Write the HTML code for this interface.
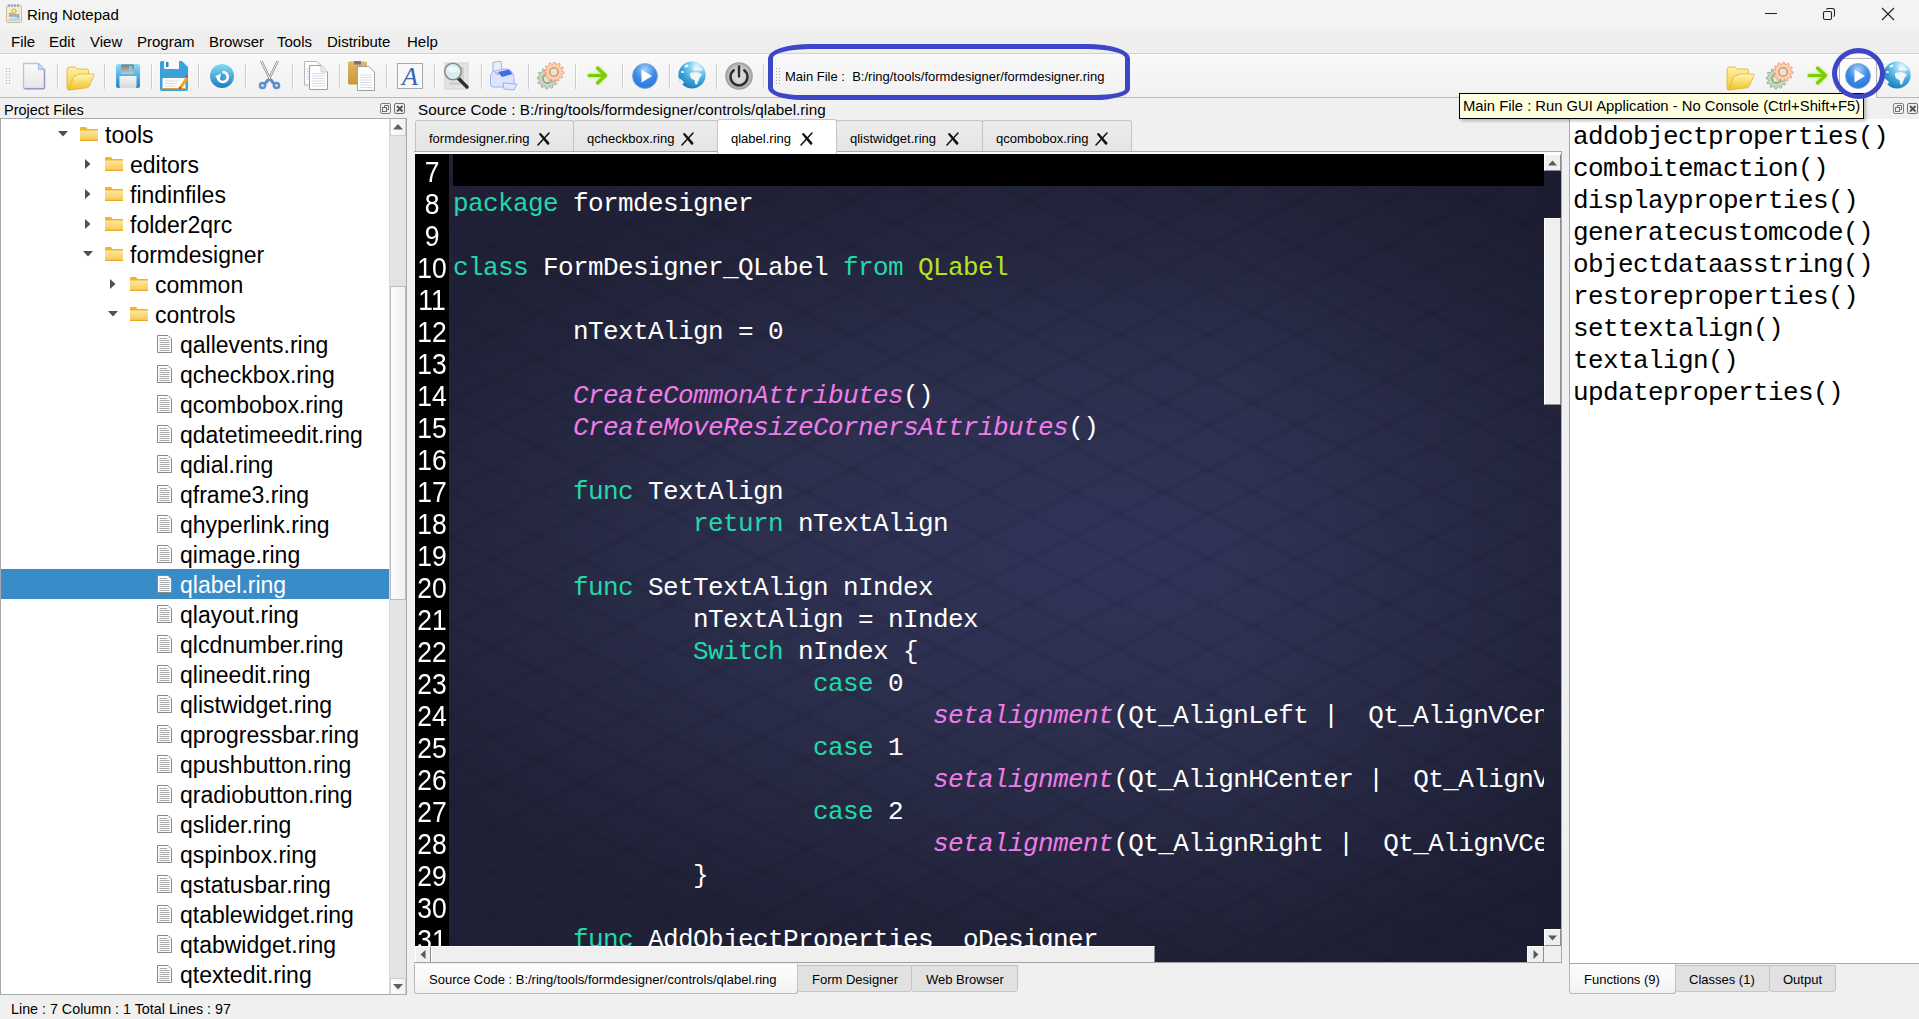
<!DOCTYPE html>
<html><head><meta charset="utf-8">
<style>
*{box-sizing:border-box}
html,body{margin:0;padding:0}
body{width:1919px;height:1019px;position:relative;overflow:hidden;background:#f0f0f0;font-family:"Liberation Sans",sans-serif;color:#000}
.a{position:absolute}
.t{position:absolute;white-space:pre;line-height:1}
#title{left:0;top:0;width:1919px;height:29px;background:#f3f3f3}
#menu{left:0;top:29px;width:1919px;height:25px;background:#eeeeee;border-bottom:1px solid #d2d2d2}
#tb{left:0;top:54px;width:1919px;height:44px;background:linear-gradient(#f9f9f9,#f1f1f1);border-bottom:1px solid #bababa}
.sep{position:absolute;top:64px;width:1px;height:25px;background:#d4d4d4;border-right:1px solid #fbfbfb}
#tree{left:0;top:118px;width:407px;height:877px;background:#fff;border:1px solid #a9a9a9}
.row{position:absolute;left:0;height:30px;width:388px;font-size:23px;line-height:30px;white-space:pre}
#editor{left:415px;top:154px;width:1146px;height:810px;overflow:hidden;
 background:repeating-linear-gradient(26.57deg,rgba(10,10,25,0) 0px,rgba(10,10,25,0) 34px,rgba(10,10,25,0.07) 34px,rgba(10,10,25,0.07) 40px),
 repeating-linear-gradient(153.43deg,rgba(10,10,25,0) 0px,rgba(10,10,25,0) 34px,rgba(10,10,25,0.07) 34px,rgba(10,10,25,0.07) 40px),
 linear-gradient(90deg,rgba(15,15,28,0) 72%,rgba(15,15,28,0.24) 100%),
 radial-gradient(ellipse 800px 400px at 700px 400px,#31345a 0%,#2b2e4b 50%,#202137 100%)}
.ln{position:absolute;left:0;width:34px;height:32px;font-size:26.5px;line-height:32px;color:#fff;text-align:center;transform:scaleY(1.1);transform-origin:50% 20%}
.cl{position:absolute;left:38px;height:32px;font-family:"Liberation Mono",monospace;font-size:26px;letter-spacing:-0.6px;line-height:32px;color:#fff;white-space:pre}
.k{color:#22d8a8}.y{color:#b8e41e}.p{color:#f07ce8;font-style:italic}
.tab{position:absolute;top:120px;height:34px;background:linear-gradient(#ececec,#e4e4e4);border:1px solid #c4c4c4;border-bottom:none;font-size:13px;border-radius:3px 3px 0 0}
.fn{position:absolute;left:4px;font-family:"Liberation Mono",monospace;font-size:26px;letter-spacing:-0.6px;line-height:32px;white-space:pre}
</style></head><body>

<!-- title bar -->
<div id="title" class="a"></div>
<div class="t" style="left:27px;top:7px;font-size:15px;color:#000">Ring Notepad</div>
<!-- window controls -->
<div class="a" style="left:1765px;top:13px;width:12px;height:1px;background:#222"></div>
<svg class="a" style="left:1822px;top:7px" width="14" height="14" viewBox="0 0 14 14"><rect x="1.5" y="4.5" width="8" height="8" rx="1.5" fill="none" stroke="#222" stroke-width="1.1"/><path d="M4.5 2.5 Q4.8 1.5 6 1.5 H10.5 Q12.5 1.5 12.5 3.5 V8 Q12.5 9.2 11.5 9.5" fill="none" stroke="#222" stroke-width="1.1"/></svg>
<svg class="a" style="left:1881px;top:7px" width="14" height="14" viewBox="0 0 14 14"><path d="M1 1 L13 13 M13 1 L1 13" stroke="#222" stroke-width="1.1"/></svg>

<!-- menu -->
<div id="menu" class="a"></div>
<div class="t" style="left:11px;top:34px;font-size:15px">File</div>
<div class="t" style="left:49px;top:34px;font-size:15px">Edit</div>
<div class="t" style="left:90px;top:34px;font-size:15px">View</div>
<div class="t" style="left:137px;top:34px;font-size:15px">Program</div>
<div class="t" style="left:209px;top:34px;font-size:15px">Browser</div>
<div class="t" style="left:277px;top:34px;font-size:15px">Tools</div>
<div class="t" style="left:327px;top:34px;font-size:15px">Distribute</div>
<div class="t" style="left:407px;top:34px;font-size:15px">Help</div>

<!-- toolbar -->
<div id="tb" class="a"></div>
<svg class="a" style="left:6px;top:68px" width="4" height="16" viewBox="0 0 4 16"><rect x="0" y="0" width="1" height="1" fill="#a8a8a8"/><rect x="0" y="3" width="1" height="1" fill="#a8a8a8"/><rect x="0" y="6" width="1" height="1" fill="#a8a8a8"/><rect x="0" y="9" width="1" height="1" fill="#a8a8a8"/><rect x="0" y="12" width="1" height="1" fill="#a8a8a8"/><rect x="0" y="15" width="1" height="1" fill="#a8a8a8"/><rect x="3" y="0" width="1" height="1" fill="#a8a8a8"/><rect x="3" y="3" width="1" height="1" fill="#a8a8a8"/><rect x="3" y="6" width="1" height="1" fill="#a8a8a8"/><rect x="3" y="9" width="1" height="1" fill="#a8a8a8"/><rect x="3" y="12" width="1" height="1" fill="#a8a8a8"/><rect x="3" y="15" width="1" height="1" fill="#a8a8a8"/></svg>
<div class="a" style="left:57px;top:64px;width:1px;height:25px;background:#cdcdcd"></div><div class="a" style="left:58px;top:64px;width:1px;height:25px;background:#fdfdfd"></div>
<div class="a" style="left:104px;top:64px;width:1px;height:25px;background:#cdcdcd"></div><div class="a" style="left:105px;top:64px;width:1px;height:25px;background:#fdfdfd"></div>
<div class="a" style="left:151px;top:64px;width:1px;height:25px;background:#cdcdcd"></div><div class="a" style="left:152px;top:64px;width:1px;height:25px;background:#fdfdfd"></div>
<div class="a" style="left:198px;top:64px;width:1px;height:25px;background:#cdcdcd"></div><div class="a" style="left:199px;top:64px;width:1px;height:25px;background:#fdfdfd"></div>
<div class="a" style="left:245px;top:64px;width:1px;height:25px;background:#cdcdcd"></div><div class="a" style="left:246px;top:64px;width:1px;height:25px;background:#fdfdfd"></div>
<div class="a" style="left:292px;top:64px;width:1px;height:25px;background:#cdcdcd"></div><div class="a" style="left:293px;top:64px;width:1px;height:25px;background:#fdfdfd"></div>
<div class="a" style="left:339px;top:64px;width:1px;height:25px;background:#cdcdcd"></div><div class="a" style="left:340px;top:64px;width:1px;height:25px;background:#fdfdfd"></div>
<div class="a" style="left:386px;top:64px;width:1px;height:25px;background:#cdcdcd"></div><div class="a" style="left:387px;top:64px;width:1px;height:25px;background:#fdfdfd"></div>
<div class="a" style="left:434px;top:64px;width:1px;height:25px;background:#cdcdcd"></div><div class="a" style="left:435px;top:64px;width:1px;height:25px;background:#fdfdfd"></div>
<div class="a" style="left:481px;top:64px;width:1px;height:25px;background:#cdcdcd"></div><div class="a" style="left:482px;top:64px;width:1px;height:25px;background:#fdfdfd"></div>
<div class="a" style="left:528px;top:64px;width:1px;height:25px;background:#cdcdcd"></div><div class="a" style="left:529px;top:64px;width:1px;height:25px;background:#fdfdfd"></div>
<div class="a" style="left:575px;top:64px;width:1px;height:25px;background:#cdcdcd"></div><div class="a" style="left:576px;top:64px;width:1px;height:25px;background:#fdfdfd"></div>
<div class="a" style="left:622px;top:64px;width:1px;height:25px;background:#cdcdcd"></div><div class="a" style="left:623px;top:64px;width:1px;height:25px;background:#fdfdfd"></div>
<div class="a" style="left:669px;top:64px;width:1px;height:25px;background:#cdcdcd"></div><div class="a" style="left:670px;top:64px;width:1px;height:25px;background:#fdfdfd"></div>
<div class="a" style="left:716px;top:64px;width:1px;height:25px;background:#cdcdcd"></div><div class="a" style="left:717px;top:64px;width:1px;height:25px;background:#fdfdfd"></div>
<div class="a" style="left:763px;top:64px;width:1px;height:25px;background:#cdcdcd"></div><div class="a" style="left:764px;top:64px;width:1px;height:25px;background:#fdfdfd"></div>
<svg class="a" style="left:22px;top:62px" width="24" height="28" viewBox="0 0 24 28"><defs><linearGradient id="gn" x1="0" y1="0" x2="0" y2="1"><stop offset="0" stop-color="#fafafa"/><stop offset="1" stop-color="#e6e6e6"/></linearGradient></defs>
<path d="M1.5 1.5 H16.5 L22.5 7.5 V25.5 Q22.5 26.5 21.5 26.5 H2.5 Q1.5 26.5 1.5 25.5Z" fill="url(#gn)" stroke="#b4c3e6" stroke-width="1.3"/>
<path d="M22.5 8 V25.5 Q22.5 26.8 21.5 26.8 H2.5" fill="none" stroke="#9898c0" stroke-width="1.4"/>
<path d="M16.5 1.5 V7.5 H22.5Z" fill="#cbdaf5" stroke="#9fb8ea" stroke-width="1"/></svg>
<svg class="a" style="left:66px;top:66px" width="29" height="25" viewBox="0 0 29 25"><defs><linearGradient id="go66" x1="0" y1="0" x2="0" y2="1"><stop offset="0" stop-color="#fff3a8"/><stop offset="1" stop-color="#f4c62e"/></linearGradient>
<linearGradient id="go266" x1="0" y1="0" x2="0" y2="1"><stop offset="0" stop-color="#fff6b8"/><stop offset="1" stop-color="#f2c21f"/></linearGradient></defs>
<path d="M1 4 Q1 1 4 1 H9 L11 3 H21 Q22.5 3 22.5 5 V20 L3 24 Q1 24 1 22Z" fill="url(#go66)" stroke="#d9b032" stroke-width="0.8"/>
<path d="M3 24 L7 12 Q8 9.5 10 9.5 L14 8 H27.5 Q28.5 8 28 9.5 L23 20.5 Q22.5 21.5 21 21.8 Z" fill="url(#go266)" stroke="#dcb23a" stroke-width="0.8"/></svg>
<svg class="a" style="left:116px;top:64px" width="24" height="24" viewBox="0 0 24 24"><defs><linearGradient id="gs" x1="0" y1="0" x2="0" y2="1"><stop offset="0" stop-color="#8fdcf8"/><stop offset="1" stop-color="#1585c8"/></linearGradient>
<linearGradient id="gs2" x1="0" y1="0" x2="0" y2="1"><stop offset="0" stop-color="#7b7b7b"/><stop offset="1" stop-color="#c8c8c8"/></linearGradient>
<linearGradient id="gs3" x1="0" y1="0" x2="0" y2="1"><stop offset="0" stop-color="#f4f4f4"/><stop offset="1" stop-color="#d8d8d8"/></linearGradient></defs>
<rect x="0" y="0" width="24" height="24" rx="2.5" fill="url(#gs)"/>
<rect x="5" y="0.5" width="13" height="9.5" rx="1" fill="url(#gs2)"/>
<rect x="13" y="2" width="3" height="6" fill="#7fcdf0"/>
<rect x="3.5" y="12" width="17" height="12" rx="1" fill="url(#gs3)"/></svg>
<svg class="a" style="left:160px;top:61px" width="28" height="30" viewBox="0 0 28 30"><path d="M2 0 H22 L28 6 V28 Q28 30 26 30 H2 Q0 30 0 28 V2 Q0 0 2 0Z" fill="#3ba1da"/>
<rect x="4" y="0" width="15" height="8" fill="#fafafa"/><rect x="6" y="1" width="2.5" height="5" fill="#2c89c2"/>
<rect x="2.5" y="17" width="23" height="11" fill="#fdfdfd"/>
<path d="M5 20 H18 M5 22.5 H17 M5 25 H15" stroke="#d2d2d2" stroke-width="0.8"/>
<rect x="2.5" y="27" width="23" height="1.3" fill="#e0a040"/>
<path d="M19.5 25.5 L26 16 L28.5 18 L22 27 Z" fill="#efa425"/>
<path d="M25.5 15.5 L27 13.5 L29.5 15.5 L28.3 17.5Z" fill="#e63c3c"/>
<path d="M19.5 25.5 L19 28 L21.5 27Z" fill="#333"/></svg>
<svg class="a" style="left:210px;top:64px" width="24" height="24" viewBox="0 0 24 24"><defs><linearGradient id="gr" x1="0" y1="0" x2="0" y2="1"><stop offset="0" stop-color="#89daf6"/><stop offset="1" stop-color="#1a7cbf"/></linearGradient></defs>
<circle cx="12" cy="12" r="12" fill="url(#gr)"/>
<path d="M7.8 13 A5 5 0 1 0 12.5 8" fill="none" stroke="#fff" stroke-width="2.6"/>
<path d="M5 12.5 L11 9.5 L9.5 16Z" fill="#fff"/>
<circle cx="12.5" cy="12" r="1.4" fill="#3a9fd8"/></svg>
<svg class="a" style="left:258px;top:61px" width="23" height="29" viewBox="0 0 23 29"><path d="M3.5 0.5 L12.5 19 M19.5 0.5 L10.5 19" stroke="#8a8a8a" stroke-width="2.4" stroke-linecap="round"/>
<path d="M3.5 0.5 L12.5 19 M19.5 0.5 L10.5 19" stroke="#f4f4f4" stroke-width="1" stroke-linecap="round"/>
<path d="M10 19 L6 24 M13 19 L17 24" stroke="#5a8fcc" stroke-width="3" stroke-linecap="round"/>
<circle cx="4.5" cy="24.5" r="3.8" fill="#5b8ecb"/><circle cx="18.5" cy="24.5" r="3.8" fill="#5b8ecb"/>
<circle cx="4.5" cy="24.5" r="1.3" fill="#e6eef8"/><circle cx="18.5" cy="24.5" r="1.3" fill="#e6eef8"/></svg>
<svg class="a" style="left:304px;top:61px" width="25" height="30" viewBox="0 0 25 30"><path d="M0.5 0.5 H13 L17 4.5 V24 H0.5Z" fill="#fbfbfb" stroke="#b8b8b8"/>
<path d="M5.5 4.5 H17 L23.5 11 V28.5 H5.5Z" fill="#fefefe" stroke="#9e9e9e"/>
<path d="M17 4.5 V11 H23.5" fill="#ececec" stroke="#c0c0c0" stroke-width="0.7"/>
<path d="M8 12.5H21 M8 15H21 M8 17.5H21 M8 20H21 M8 22.5H21 M8 25H21" stroke="#d4dde8" stroke-width="1"/>
<path d="M3 8H5 M3 10.5H5 M3 13H5 M3 15.5H5 M3 18H5" stroke="#c8d6e8" stroke-width="1"/></svg>
<svg class="a" style="left:348px;top:61px" width="27" height="30" viewBox="0 0 27 30"><defs><linearGradient id="gp" x1="0" y1="0" x2="0" y2="1"><stop offset="0" stop-color="#e0b866"/><stop offset="1" stop-color="#c89635"/></linearGradient></defs>
<rect x="0" y="0.5" width="19" height="23" rx="1.5" fill="url(#gp)"/>
<rect x="6" y="0" width="7" height="3.5" fill="#777"/>
<path d="M9.5 5.5 H21 L26.5 11 V29.5 H9.5Z" fill="#fefefe" stroke="#a0a0a0"/>
<path d="M12 14H24 M12 16.5H24 M12 19H24 M12 21.5H24 M12 24H24 M12 26.5H24" stroke="#d4dde8" stroke-width="1"/></svg>
<svg class="a" style="left:397px;top:63px" width="26" height="26" viewBox="0 0 26 26"><rect x="0.5" y="0.5" width="25" height="25" fill="#f8f8f8" stroke="#a8a8a8"/>
<text x="13" y="22" text-anchor="middle" font-family="Liberation Serif" font-style="italic" font-size="26" fill="#3466b0">A</text></svg>
<svg class="a" style="left:443px;top:62px" width="28" height="28" viewBox="0 0 28 28"><rect x="2" y="1" width="23" height="26" fill="#e4e4e4" stroke="#d2d2d2"/>
<rect x="13" y="5" width="8" height="14" fill="#d0d0d0"/><rect x="6" y="20" width="12" height="3" fill="#d0d0d0"/>
<path d="M14 15 L24 25" stroke="#2e2e2e" stroke-width="3.5" stroke-linecap="round"/>
<circle cx="10" cy="9.5" r="8.3" fill="#d8ecf0" stroke="#8a8a8a" stroke-width="1.5"/>
<ellipse cx="10" cy="7.5" rx="6" ry="3" fill="#eef8fa"/></svg>
<svg class="a" style="left:490px;top:61px" width="28" height="30" viewBox="0 0 28 30"><path d="M3 11 L3 1.5 L11 0 L12 10Z" fill="#e8eefe" stroke="#8aa0f0" stroke-width="0.8" transform="translate(0,0)"/>
<path d="M0.5 16 Q0.5 11 5 10 L14 8 Q19 7.5 21 10 L23 13 Q24 15 24 19 V24 Q24 26 22 26 H3 Q0.5 26 0.5 23Z" fill="#dde4fd" stroke="#98a8f0" stroke-width="0.9"/>
<path d="M8 11 L19 8.5 L22.5 13 L12 16Z" fill="#3f6ee6"/>
<path d="M13 22 L27 23 L24 29 L14 28Z" fill="#e0e8fe" stroke="#8aa0f0" stroke-width="0.8"/>
<circle cx="6" cy="12" r="0.8" fill="#3c3"/><circle cx="8" cy="13" r="0.8" fill="#e44"/></svg>
<svg class="a" style="left:537px;top:62px" width="29" height="28" viewBox="0 0 29 28"><polygon points="21.00,16.50 20.91,17.87 18.41,18.62 18.07,19.63 19.59,21.75 18.83,22.89 16.29,22.29 15.49,23.00 15.75,25.59 14.52,26.20 12.62,24.41 11.57,24.62 10.50,27.00 9.13,26.91 8.38,24.41 7.37,24.07 5.25,25.59 4.11,24.83 4.71,22.29 4.00,21.49 1.41,21.75 0.80,20.52 2.59,18.62 2.38,17.57 0.00,16.50 0.09,15.13 2.59,14.38 2.93,13.37 1.41,11.25 2.17,10.11 4.71,10.71 5.51,10.00 5.25,7.41 6.48,6.80 8.38,8.59 9.43,8.38 10.50,6.00 11.87,6.09 12.62,8.59 13.63,8.93 15.75,7.41 16.89,8.17 16.29,10.71 17.00,11.51 19.59,11.25 20.20,12.48 18.41,14.38 18.62,15.43" fill="#c9d6c0" stroke="#8aa58a" stroke-width="0.8"/><circle cx="10.5" cy="16.5" r="4.41" fill="#dfe9d8" stroke="#8aa58a" stroke-width="1.6"/><polygon points="27.00,10.00 26.91,11.31 24.53,12.02 24.21,12.98 25.66,15.00 24.93,16.09 22.52,15.52 21.75,16.19 22.00,18.66 20.83,19.24 19.02,17.53 18.02,17.73 17.00,20.00 15.69,19.91 14.98,17.53 14.02,17.21 12.00,18.66 10.91,17.93 11.48,15.52 10.81,14.75 8.34,15.00 7.76,13.83 9.47,12.02 9.27,11.02 7.00,10.00 7.09,8.69 9.47,7.98 9.79,7.02 8.34,5.00 9.07,3.91 11.48,4.48 12.25,3.81 12.00,1.34 13.17,0.76 14.98,2.47 15.98,2.27 17.00,0.00 18.31,0.09 19.02,2.47 19.98,2.79 22.00,1.34 23.09,2.07 22.52,4.48 23.19,5.25 25.66,5.00 26.24,6.17 24.53,7.98 24.73,8.98" fill="#fcd2b4" stroke="#e8926a" stroke-width="0.8"/><circle cx="17" cy="10" r="4.2" fill="#dfe9d8" stroke="#e8926a" stroke-width="1.6"/></svg>
<svg class="a" style="left:585px;top:65px" width="26" height="22" viewBox="0 0 26 22"><defs><filter id="bl585"><feGaussianBlur stdDeviation="1.2"/></filter></defs>
<path d="M3 10.5 H20 M12 2.5 L20.5 10.5 L12 18.5" fill="none" stroke="#c8ee90" stroke-width="5" filter="url(#bl585)"/>
<path d="M4 10.5 H20 M12.5 3 L20.5 10.5 L12.5 18" fill="none" stroke="#7ccc0c" stroke-width="3.2" stroke-linecap="round" stroke-linejoin="round"/></svg>
<svg class="a" style="left:632px;top:63px" width="26" height="26" viewBox="0 0 26 26"><defs><radialGradient id="gpl632" cx="0.5" cy="0.25" r="0.8"><stop offset="0" stop-color="#a8d0fb"/><stop offset="0.5" stop-color="#3b8bea"/><stop offset="1" stop-color="#2a72d8"/></radialGradient></defs>
<circle cx="13" cy="13" r="12.5" fill="url(#gpl632)" stroke="#8aa6c6" stroke-width="0.8"/>
<path d="M9.5 6.5 L20 13 L9.5 19.5Z" fill="#fff"/></svg>
<svg class="a" style="left:678px;top:61px" width="28" height="28" viewBox="0 0 28 28"><defs><radialGradient id="ggl678" cx="0.68" cy="0.18" r="0.95"><stop offset="0" stop-color="#e4f8fe"/><stop offset="0.3" stop-color="#7fcdf0"/><stop offset="0.6" stop-color="#3aa2d8"/><stop offset="1" stop-color="#1670b0"/></radialGradient></defs>
<circle cx="14" cy="14" r="13.6" fill="url(#ggl678)"/>
<path d="M12 12.5 Q13 11 15.5 11.5 L19 11 Q21 12.5 23.5 13 Q24 15 22 16 Q21 18 20 21 Q19 24 18 24 Q16.5 21.5 16.5 19 Q14 18.5 13 17 Q11.5 15 12 12.5Z" fill="#f2f5f6"/>
<path d="M15 7 Q19 5.5 22 6.5 L25.5 8.5 Q23 9.8 19.5 9.2 L16 9.8Z" fill="#eaf6fb"/>
<ellipse cx="8.5" cy="5" rx="2.2" ry="1.2" transform="rotate(-30 8.5 5)" fill="#f4fafd"/>
<ellipse cx="4.5" cy="11" rx="1.6" ry="1" fill="#f4fafd"/>
<path d="M0.8 17 Q3 18 6 21 Q5.5 23 4 23.5 Q1.5 21 0.8 17Z" fill="#eef4f7"/></svg>
<svg class="a" style="left:725px;top:62px" width="28" height="28" viewBox="0 0 28 28"><defs><radialGradient id="gpw" cx="0.5" cy="0.5" r="0.5"><stop offset="0" stop-color="#e8e8e8"/><stop offset="0.7" stop-color="#c4c4c4"/><stop offset="1" stop-color="#9a9a9a"/></radialGradient></defs>
<circle cx="14" cy="14" r="13.8" fill="url(#gpw)"/>
<path d="M8.8 8.2 A8.5 8.5 0 1 0 19.2 8.2" fill="none" stroke="#2c2c2c" stroke-width="2.4" stroke-linecap="round"/>
<path d="M14 4.5 V14.5" stroke="#2c2c2c" stroke-width="2.4" stroke-linecap="round"/></svg>
<svg class="a" style="left:776px;top:68px" width="4" height="16" viewBox="0 0 4 16"><rect x="0" y="0" width="1" height="1" fill="#a8a8a8"/><rect x="0" y="3" width="1" height="1" fill="#a8a8a8"/><rect x="0" y="6" width="1" height="1" fill="#a8a8a8"/><rect x="0" y="9" width="1" height="1" fill="#a8a8a8"/><rect x="0" y="12" width="1" height="1" fill="#a8a8a8"/><rect x="0" y="15" width="1" height="1" fill="#a8a8a8"/><rect x="3" y="0" width="1" height="1" fill="#a8a8a8"/><rect x="3" y="3" width="1" height="1" fill="#a8a8a8"/><rect x="3" y="6" width="1" height="1" fill="#a8a8a8"/><rect x="3" y="9" width="1" height="1" fill="#a8a8a8"/><rect x="3" y="12" width="1" height="1" fill="#a8a8a8"/><rect x="3" y="15" width="1" height="1" fill="#a8a8a8"/></svg>
<div class="t" style="left:785px;top:70px;font-size:13px">Main File :  B:/ring/tools/formdesigner/formdesigner.ring</div>
<div class="a" style="left:1839px;top:58px;width:38px;height:40px;background:#fdfdfd;border:1px solid #b4b4b4;border-bottom:none"></div>
<svg class="a" style="left:1726px;top:66px" width="29" height="25" viewBox="0 0 29 25"><defs><linearGradient id="go1726" x1="0" y1="0" x2="0" y2="1"><stop offset="0" stop-color="#fff3a8"/><stop offset="1" stop-color="#f4c62e"/></linearGradient>
<linearGradient id="go21726" x1="0" y1="0" x2="0" y2="1"><stop offset="0" stop-color="#fff6b8"/><stop offset="1" stop-color="#f2c21f"/></linearGradient></defs>
<path d="M1 4 Q1 1 4 1 H9 L11 3 H21 Q22.5 3 22.5 5 V20 L3 24 Q1 24 1 22Z" fill="url(#go1726)" stroke="#d9b032" stroke-width="0.8"/>
<path d="M3 24 L7 12 Q8 9.5 10 9.5 L14 8 H27.5 Q28.5 8 28 9.5 L23 20.5 Q22.5 21.5 21 21.8 Z" fill="url(#go21726)" stroke="#dcb23a" stroke-width="0.8"/></svg>
<svg class="a" style="left:1766px;top:62px" width="29" height="28" viewBox="0 0 29 28"><polygon points="21.00,16.50 20.91,17.87 18.41,18.62 18.07,19.63 19.59,21.75 18.83,22.89 16.29,22.29 15.49,23.00 15.75,25.59 14.52,26.20 12.62,24.41 11.57,24.62 10.50,27.00 9.13,26.91 8.38,24.41 7.37,24.07 5.25,25.59 4.11,24.83 4.71,22.29 4.00,21.49 1.41,21.75 0.80,20.52 2.59,18.62 2.38,17.57 0.00,16.50 0.09,15.13 2.59,14.38 2.93,13.37 1.41,11.25 2.17,10.11 4.71,10.71 5.51,10.00 5.25,7.41 6.48,6.80 8.38,8.59 9.43,8.38 10.50,6.00 11.87,6.09 12.62,8.59 13.63,8.93 15.75,7.41 16.89,8.17 16.29,10.71 17.00,11.51 19.59,11.25 20.20,12.48 18.41,14.38 18.62,15.43" fill="#c9d6c0" stroke="#8aa58a" stroke-width="0.8"/><circle cx="10.5" cy="16.5" r="4.41" fill="#dfe9d8" stroke="#8aa58a" stroke-width="1.6"/><polygon points="27.00,10.00 26.91,11.31 24.53,12.02 24.21,12.98 25.66,15.00 24.93,16.09 22.52,15.52 21.75,16.19 22.00,18.66 20.83,19.24 19.02,17.53 18.02,17.73 17.00,20.00 15.69,19.91 14.98,17.53 14.02,17.21 12.00,18.66 10.91,17.93 11.48,15.52 10.81,14.75 8.34,15.00 7.76,13.83 9.47,12.02 9.27,11.02 7.00,10.00 7.09,8.69 9.47,7.98 9.79,7.02 8.34,5.00 9.07,3.91 11.48,4.48 12.25,3.81 12.00,1.34 13.17,0.76 14.98,2.47 15.98,2.27 17.00,0.00 18.31,0.09 19.02,2.47 19.98,2.79 22.00,1.34 23.09,2.07 22.52,4.48 23.19,5.25 25.66,5.00 26.24,6.17 24.53,7.98 24.73,8.98" fill="#fcd2b4" stroke="#e8926a" stroke-width="0.8"/><circle cx="17" cy="10" r="4.2" fill="#dfe9d8" stroke="#e8926a" stroke-width="1.6"/></svg>
<svg class="a" style="left:1805px;top:65px" width="26" height="22" viewBox="0 0 26 22"><defs><filter id="bl1805"><feGaussianBlur stdDeviation="1.2"/></filter></defs>
<path d="M3 10.5 H20 M12 2.5 L20.5 10.5 L12 18.5" fill="none" stroke="#c8ee90" stroke-width="5" filter="url(#bl1805)"/>
<path d="M4 10.5 H20 M12.5 3 L20.5 10.5 L12.5 18" fill="none" stroke="#7ccc0c" stroke-width="3.2" stroke-linecap="round" stroke-linejoin="round"/></svg>
<svg class="a" style="left:1845px;top:63px" width="26" height="26" viewBox="0 0 26 26"><defs><radialGradient id="gpl1845" cx="0.5" cy="0.25" r="0.8"><stop offset="0" stop-color="#a8d0fb"/><stop offset="0.5" stop-color="#3b8bea"/><stop offset="1" stop-color="#2a72d8"/></radialGradient></defs>
<circle cx="13" cy="13" r="12.5" fill="url(#gpl1845)" stroke="#8aa6c6" stroke-width="0.8"/>
<path d="M9.5 6.5 L20 13 L9.5 19.5Z" fill="#fff"/></svg>
<svg class="a" style="left:1883px;top:61px" width="28" height="28" viewBox="0 0 28 28"><defs><radialGradient id="ggl1883" cx="0.68" cy="0.18" r="0.95"><stop offset="0" stop-color="#e4f8fe"/><stop offset="0.3" stop-color="#7fcdf0"/><stop offset="0.6" stop-color="#3aa2d8"/><stop offset="1" stop-color="#1670b0"/></radialGradient></defs>
<circle cx="14" cy="14" r="13.6" fill="url(#ggl1883)"/>
<path d="M12 12.5 Q13 11 15.5 11.5 L19 11 Q21 12.5 23.5 13 Q24 15 22 16 Q21 18 20 21 Q19 24 18 24 Q16.5 21.5 16.5 19 Q14 18.5 13 17 Q11.5 15 12 12.5Z" fill="#f2f5f6"/>
<path d="M15 7 Q19 5.5 22 6.5 L25.5 8.5 Q23 9.8 19.5 9.2 L16 9.8Z" fill="#eaf6fb"/>
<ellipse cx="8.5" cy="5" rx="2.2" ry="1.2" transform="rotate(-30 8.5 5)" fill="#f4fafd"/>
<ellipse cx="4.5" cy="11" rx="1.6" ry="1" fill="#f4fafd"/>
<path d="M0.8 17 Q3 18 6 21 Q5.5 23 4 23.5 Q1.5 21 0.8 17Z" fill="#eef4f7"/></svg>

<!-- dock titles -->
<div class="t" style="left:4px;top:103px;font-size:14.5px">Project Files</div>
<div class="t" style="left:418px;top:102px;font-size:15.25px">Source Code : B:/ring/tools/formdesigner/controls/qlabel.ring</div>

<!-- tree -->
<div id="tree" class="a"></div>
<svg class="a" style="left:58px;top:131px" width="11" height="6"><path d="M0 0 L10 0 L5 5.5Z" fill="#505050"/></svg>
<svg class="a" style="left:80px;top:127px" width="18" height="14" viewBox="0 0 18 14"><defs><linearGradient id="gf" x1="0" y1="0" x2="0" y2="1"><stop offset="0" stop-color="#fde7a0"/><stop offset="1" stop-color="#f8c850"/></linearGradient></defs><path d="M0 1 Q0 0 1 0 H6 L7.5 2 H18 V14 H0Z" fill="#f2b32a"/><rect x="0" y="3.5" width="18" height="10.5" fill="url(#gf)"/><rect x="0" y="12.8" width="18" height="1.2" fill="#eaa82a"/></svg>
<div class="row" style="left:105px;top:120px">tools</div>
<svg class="a" style="left:85px;top:159px" width="6" height="11"><path d="M0 0 L5.5 5 L0 10Z" fill="#505050"/></svg>
<svg class="a" style="left:105px;top:157px" width="18" height="14" viewBox="0 0 18 14"><defs><linearGradient id="gf" x1="0" y1="0" x2="0" y2="1"><stop offset="0" stop-color="#fde7a0"/><stop offset="1" stop-color="#f8c850"/></linearGradient></defs><path d="M0 1 Q0 0 1 0 H6 L7.5 2 H18 V14 H0Z" fill="#f2b32a"/><rect x="0" y="3.5" width="18" height="10.5" fill="url(#gf)"/><rect x="0" y="12.8" width="18" height="1.2" fill="#eaa82a"/></svg>
<div class="row" style="left:130px;top:150px">editors</div>
<svg class="a" style="left:85px;top:189px" width="6" height="11"><path d="M0 0 L5.5 5 L0 10Z" fill="#505050"/></svg>
<svg class="a" style="left:105px;top:187px" width="18" height="14" viewBox="0 0 18 14"><defs><linearGradient id="gf" x1="0" y1="0" x2="0" y2="1"><stop offset="0" stop-color="#fde7a0"/><stop offset="1" stop-color="#f8c850"/></linearGradient></defs><path d="M0 1 Q0 0 1 0 H6 L7.5 2 H18 V14 H0Z" fill="#f2b32a"/><rect x="0" y="3.5" width="18" height="10.5" fill="url(#gf)"/><rect x="0" y="12.8" width="18" height="1.2" fill="#eaa82a"/></svg>
<div class="row" style="left:130px;top:180px">findinfiles</div>
<svg class="a" style="left:85px;top:219px" width="6" height="11"><path d="M0 0 L5.5 5 L0 10Z" fill="#505050"/></svg>
<svg class="a" style="left:105px;top:217px" width="18" height="14" viewBox="0 0 18 14"><defs><linearGradient id="gf" x1="0" y1="0" x2="0" y2="1"><stop offset="0" stop-color="#fde7a0"/><stop offset="1" stop-color="#f8c850"/></linearGradient></defs><path d="M0 1 Q0 0 1 0 H6 L7.5 2 H18 V14 H0Z" fill="#f2b32a"/><rect x="0" y="3.5" width="18" height="10.5" fill="url(#gf)"/><rect x="0" y="12.8" width="18" height="1.2" fill="#eaa82a"/></svg>
<div class="row" style="left:130px;top:210px">folder2qrc</div>
<svg class="a" style="left:83px;top:251px" width="11" height="6"><path d="M0 0 L10 0 L5 5.5Z" fill="#505050"/></svg>
<svg class="a" style="left:105px;top:247px" width="18" height="14" viewBox="0 0 18 14"><defs><linearGradient id="gf" x1="0" y1="0" x2="0" y2="1"><stop offset="0" stop-color="#fde7a0"/><stop offset="1" stop-color="#f8c850"/></linearGradient></defs><path d="M0 1 Q0 0 1 0 H6 L7.5 2 H18 V14 H0Z" fill="#f2b32a"/><rect x="0" y="3.5" width="18" height="10.5" fill="url(#gf)"/><rect x="0" y="12.8" width="18" height="1.2" fill="#eaa82a"/></svg>
<div class="row" style="left:130px;top:240px">formdesigner</div>
<svg class="a" style="left:110px;top:279px" width="6" height="11"><path d="M0 0 L5.5 5 L0 10Z" fill="#505050"/></svg>
<svg class="a" style="left:130px;top:277px" width="18" height="14" viewBox="0 0 18 14"><defs><linearGradient id="gf" x1="0" y1="0" x2="0" y2="1"><stop offset="0" stop-color="#fde7a0"/><stop offset="1" stop-color="#f8c850"/></linearGradient></defs><path d="M0 1 Q0 0 1 0 H6 L7.5 2 H18 V14 H0Z" fill="#f2b32a"/><rect x="0" y="3.5" width="18" height="10.5" fill="url(#gf)"/><rect x="0" y="12.8" width="18" height="1.2" fill="#eaa82a"/></svg>
<div class="row" style="left:155px;top:270px">common</div>
<svg class="a" style="left:108px;top:311px" width="11" height="6"><path d="M0 0 L10 0 L5 5.5Z" fill="#505050"/></svg>
<svg class="a" style="left:130px;top:307px" width="18" height="14" viewBox="0 0 18 14"><defs><linearGradient id="gf" x1="0" y1="0" x2="0" y2="1"><stop offset="0" stop-color="#fde7a0"/><stop offset="1" stop-color="#f8c850"/></linearGradient></defs><path d="M0 1 Q0 0 1 0 H6 L7.5 2 H18 V14 H0Z" fill="#f2b32a"/><rect x="0" y="3.5" width="18" height="10.5" fill="url(#gf)"/><rect x="0" y="12.8" width="18" height="1.2" fill="#eaa82a"/></svg>
<div class="row" style="left:155px;top:300px">controls</div>
<svg class="a" style="left:157px;top:335px" width="15" height="18" viewBox="0 0 15 18"><path d="M0.5 0.5 H11 L14.5 4 V17.5 H0.5Z" fill="#fdfdfd" stroke="#8a8a8a"/><path d="M2.5 3.5H10M2.5 5.5H12.5M2.5 7.5H12.5M2.5 9.5H12.5M2.5 11.5H12.5M2.5 13.5H12.5M2.5 15.5H12.5" stroke="#a0a0a0" stroke-width="0.9"/></svg>
<div class="row" style="left:180px;top:330px;color:#000">qallevents.ring</div>
<svg class="a" style="left:157px;top:365px" width="15" height="18" viewBox="0 0 15 18"><path d="M0.5 0.5 H11 L14.5 4 V17.5 H0.5Z" fill="#fdfdfd" stroke="#8a8a8a"/><path d="M2.5 3.5H10M2.5 5.5H12.5M2.5 7.5H12.5M2.5 9.5H12.5M2.5 11.5H12.5M2.5 13.5H12.5M2.5 15.5H12.5" stroke="#a0a0a0" stroke-width="0.9"/></svg>
<div class="row" style="left:180px;top:360px;color:#000">qcheckbox.ring</div>
<svg class="a" style="left:157px;top:395px" width="15" height="18" viewBox="0 0 15 18"><path d="M0.5 0.5 H11 L14.5 4 V17.5 H0.5Z" fill="#fdfdfd" stroke="#8a8a8a"/><path d="M2.5 3.5H10M2.5 5.5H12.5M2.5 7.5H12.5M2.5 9.5H12.5M2.5 11.5H12.5M2.5 13.5H12.5M2.5 15.5H12.5" stroke="#a0a0a0" stroke-width="0.9"/></svg>
<div class="row" style="left:180px;top:390px;color:#000">qcombobox.ring</div>
<svg class="a" style="left:157px;top:425px" width="15" height="18" viewBox="0 0 15 18"><path d="M0.5 0.5 H11 L14.5 4 V17.5 H0.5Z" fill="#fdfdfd" stroke="#8a8a8a"/><path d="M2.5 3.5H10M2.5 5.5H12.5M2.5 7.5H12.5M2.5 9.5H12.5M2.5 11.5H12.5M2.5 13.5H12.5M2.5 15.5H12.5" stroke="#a0a0a0" stroke-width="0.9"/></svg>
<div class="row" style="left:180px;top:420px;color:#000">qdatetimeedit.ring</div>
<svg class="a" style="left:157px;top:455px" width="15" height="18" viewBox="0 0 15 18"><path d="M0.5 0.5 H11 L14.5 4 V17.5 H0.5Z" fill="#fdfdfd" stroke="#8a8a8a"/><path d="M2.5 3.5H10M2.5 5.5H12.5M2.5 7.5H12.5M2.5 9.5H12.5M2.5 11.5H12.5M2.5 13.5H12.5M2.5 15.5H12.5" stroke="#a0a0a0" stroke-width="0.9"/></svg>
<div class="row" style="left:180px;top:450px;color:#000">qdial.ring</div>
<svg class="a" style="left:157px;top:485px" width="15" height="18" viewBox="0 0 15 18"><path d="M0.5 0.5 H11 L14.5 4 V17.5 H0.5Z" fill="#fdfdfd" stroke="#8a8a8a"/><path d="M2.5 3.5H10M2.5 5.5H12.5M2.5 7.5H12.5M2.5 9.5H12.5M2.5 11.5H12.5M2.5 13.5H12.5M2.5 15.5H12.5" stroke="#a0a0a0" stroke-width="0.9"/></svg>
<div class="row" style="left:180px;top:480px;color:#000">qframe3.ring</div>
<svg class="a" style="left:157px;top:515px" width="15" height="18" viewBox="0 0 15 18"><path d="M0.5 0.5 H11 L14.5 4 V17.5 H0.5Z" fill="#fdfdfd" stroke="#8a8a8a"/><path d="M2.5 3.5H10M2.5 5.5H12.5M2.5 7.5H12.5M2.5 9.5H12.5M2.5 11.5H12.5M2.5 13.5H12.5M2.5 15.5H12.5" stroke="#a0a0a0" stroke-width="0.9"/></svg>
<div class="row" style="left:180px;top:510px;color:#000">qhyperlink.ring</div>
<svg class="a" style="left:157px;top:545px" width="15" height="18" viewBox="0 0 15 18"><path d="M0.5 0.5 H11 L14.5 4 V17.5 H0.5Z" fill="#fdfdfd" stroke="#8a8a8a"/><path d="M2.5 3.5H10M2.5 5.5H12.5M2.5 7.5H12.5M2.5 9.5H12.5M2.5 11.5H12.5M2.5 13.5H12.5M2.5 15.5H12.5" stroke="#a0a0a0" stroke-width="0.9"/></svg>
<div class="row" style="left:180px;top:540px;color:#000">qimage.ring</div>
<div class="a" style="left:1px;top:569px;width:388px;height:30px;background:#3a8cc9"></div>
<svg class="a" style="left:157px;top:575px" width="15" height="18" viewBox="0 0 15 18"><path d="M0.5 0.5 H11 L14.5 4 V17.5 H0.5Z" fill="#fdfdfd" stroke="#8a8a8a"/><path d="M2.5 3.5H10M2.5 5.5H12.5M2.5 7.5H12.5M2.5 9.5H12.5M2.5 11.5H12.5M2.5 13.5H12.5M2.5 15.5H12.5" stroke="#a0a0a0" stroke-width="0.9"/></svg>
<div class="row" style="left:180px;top:570px;color:#fff">qlabel.ring</div>
<svg class="a" style="left:157px;top:605px" width="15" height="18" viewBox="0 0 15 18"><path d="M0.5 0.5 H11 L14.5 4 V17.5 H0.5Z" fill="#fdfdfd" stroke="#8a8a8a"/><path d="M2.5 3.5H10M2.5 5.5H12.5M2.5 7.5H12.5M2.5 9.5H12.5M2.5 11.5H12.5M2.5 13.5H12.5M2.5 15.5H12.5" stroke="#a0a0a0" stroke-width="0.9"/></svg>
<div class="row" style="left:180px;top:600px;color:#000">qlayout.ring</div>
<svg class="a" style="left:157px;top:635px" width="15" height="18" viewBox="0 0 15 18"><path d="M0.5 0.5 H11 L14.5 4 V17.5 H0.5Z" fill="#fdfdfd" stroke="#8a8a8a"/><path d="M2.5 3.5H10M2.5 5.5H12.5M2.5 7.5H12.5M2.5 9.5H12.5M2.5 11.5H12.5M2.5 13.5H12.5M2.5 15.5H12.5" stroke="#a0a0a0" stroke-width="0.9"/></svg>
<div class="row" style="left:180px;top:630px;color:#000">qlcdnumber.ring</div>
<svg class="a" style="left:157px;top:665px" width="15" height="18" viewBox="0 0 15 18"><path d="M0.5 0.5 H11 L14.5 4 V17.5 H0.5Z" fill="#fdfdfd" stroke="#8a8a8a"/><path d="M2.5 3.5H10M2.5 5.5H12.5M2.5 7.5H12.5M2.5 9.5H12.5M2.5 11.5H12.5M2.5 13.5H12.5M2.5 15.5H12.5" stroke="#a0a0a0" stroke-width="0.9"/></svg>
<div class="row" style="left:180px;top:660px;color:#000">qlineedit.ring</div>
<svg class="a" style="left:157px;top:695px" width="15" height="18" viewBox="0 0 15 18"><path d="M0.5 0.5 H11 L14.5 4 V17.5 H0.5Z" fill="#fdfdfd" stroke="#8a8a8a"/><path d="M2.5 3.5H10M2.5 5.5H12.5M2.5 7.5H12.5M2.5 9.5H12.5M2.5 11.5H12.5M2.5 13.5H12.5M2.5 15.5H12.5" stroke="#a0a0a0" stroke-width="0.9"/></svg>
<div class="row" style="left:180px;top:690px;color:#000">qlistwidget.ring</div>
<svg class="a" style="left:157px;top:725px" width="15" height="18" viewBox="0 0 15 18"><path d="M0.5 0.5 H11 L14.5 4 V17.5 H0.5Z" fill="#fdfdfd" stroke="#8a8a8a"/><path d="M2.5 3.5H10M2.5 5.5H12.5M2.5 7.5H12.5M2.5 9.5H12.5M2.5 11.5H12.5M2.5 13.5H12.5M2.5 15.5H12.5" stroke="#a0a0a0" stroke-width="0.9"/></svg>
<div class="row" style="left:180px;top:720px;color:#000">qprogressbar.ring</div>
<svg class="a" style="left:157px;top:755px" width="15" height="18" viewBox="0 0 15 18"><path d="M0.5 0.5 H11 L14.5 4 V17.5 H0.5Z" fill="#fdfdfd" stroke="#8a8a8a"/><path d="M2.5 3.5H10M2.5 5.5H12.5M2.5 7.5H12.5M2.5 9.5H12.5M2.5 11.5H12.5M2.5 13.5H12.5M2.5 15.5H12.5" stroke="#a0a0a0" stroke-width="0.9"/></svg>
<div class="row" style="left:180px;top:750px;color:#000">qpushbutton.ring</div>
<svg class="a" style="left:157px;top:785px" width="15" height="18" viewBox="0 0 15 18"><path d="M0.5 0.5 H11 L14.5 4 V17.5 H0.5Z" fill="#fdfdfd" stroke="#8a8a8a"/><path d="M2.5 3.5H10M2.5 5.5H12.5M2.5 7.5H12.5M2.5 9.5H12.5M2.5 11.5H12.5M2.5 13.5H12.5M2.5 15.5H12.5" stroke="#a0a0a0" stroke-width="0.9"/></svg>
<div class="row" style="left:180px;top:780px;color:#000">qradiobutton.ring</div>
<svg class="a" style="left:157px;top:815px" width="15" height="18" viewBox="0 0 15 18"><path d="M0.5 0.5 H11 L14.5 4 V17.5 H0.5Z" fill="#fdfdfd" stroke="#8a8a8a"/><path d="M2.5 3.5H10M2.5 5.5H12.5M2.5 7.5H12.5M2.5 9.5H12.5M2.5 11.5H12.5M2.5 13.5H12.5M2.5 15.5H12.5" stroke="#a0a0a0" stroke-width="0.9"/></svg>
<div class="row" style="left:180px;top:810px;color:#000">qslider.ring</div>
<svg class="a" style="left:157px;top:845px" width="15" height="18" viewBox="0 0 15 18"><path d="M0.5 0.5 H11 L14.5 4 V17.5 H0.5Z" fill="#fdfdfd" stroke="#8a8a8a"/><path d="M2.5 3.5H10M2.5 5.5H12.5M2.5 7.5H12.5M2.5 9.5H12.5M2.5 11.5H12.5M2.5 13.5H12.5M2.5 15.5H12.5" stroke="#a0a0a0" stroke-width="0.9"/></svg>
<div class="row" style="left:180px;top:840px;color:#000">qspinbox.ring</div>
<svg class="a" style="left:157px;top:875px" width="15" height="18" viewBox="0 0 15 18"><path d="M0.5 0.5 H11 L14.5 4 V17.5 H0.5Z" fill="#fdfdfd" stroke="#8a8a8a"/><path d="M2.5 3.5H10M2.5 5.5H12.5M2.5 7.5H12.5M2.5 9.5H12.5M2.5 11.5H12.5M2.5 13.5H12.5M2.5 15.5H12.5" stroke="#a0a0a0" stroke-width="0.9"/></svg>
<div class="row" style="left:180px;top:870px;color:#000">qstatusbar.ring</div>
<svg class="a" style="left:157px;top:905px" width="15" height="18" viewBox="0 0 15 18"><path d="M0.5 0.5 H11 L14.5 4 V17.5 H0.5Z" fill="#fdfdfd" stroke="#8a8a8a"/><path d="M2.5 3.5H10M2.5 5.5H12.5M2.5 7.5H12.5M2.5 9.5H12.5M2.5 11.5H12.5M2.5 13.5H12.5M2.5 15.5H12.5" stroke="#a0a0a0" stroke-width="0.9"/></svg>
<div class="row" style="left:180px;top:900px;color:#000">qtablewidget.ring</div>
<svg class="a" style="left:157px;top:935px" width="15" height="18" viewBox="0 0 15 18"><path d="M0.5 0.5 H11 L14.5 4 V17.5 H0.5Z" fill="#fdfdfd" stroke="#8a8a8a"/><path d="M2.5 3.5H10M2.5 5.5H12.5M2.5 7.5H12.5M2.5 9.5H12.5M2.5 11.5H12.5M2.5 13.5H12.5M2.5 15.5H12.5" stroke="#a0a0a0" stroke-width="0.9"/></svg>
<div class="row" style="left:180px;top:930px;color:#000">qtabwidget.ring</div>
<svg class="a" style="left:157px;top:965px" width="15" height="18" viewBox="0 0 15 18"><path d="M0.5 0.5 H11 L14.5 4 V17.5 H0.5Z" fill="#fdfdfd" stroke="#8a8a8a"/><path d="M2.5 3.5H10M2.5 5.5H12.5M2.5 7.5H12.5M2.5 9.5H12.5M2.5 11.5H12.5M2.5 13.5H12.5M2.5 15.5H12.5" stroke="#a0a0a0" stroke-width="0.9"/></svg>
<div class="row" style="left:180px;top:960px;color:#000">qtextedit.ring</div>

<div class="a" style="left:389px;top:119px;width:1px;height:875px;background:#d9d9d9"></div>
<div class="a" style="left:390px;top:119px;width:16px;height:875px;background:#e3e3e3"></div>
<div class="a" style="left:390px;top:119px;width:16px;height:17px;background:linear-gradient(90deg,#fefefe,#f1f1f1);border:1px solid #cfcfcf;border-top:none"></div>
<svg class="a" style="left:393px;top:124px" width="10" height="6"><path d="M0 5.5 L5 0 L10 5.5Z" fill="#606060"/></svg>
<div class="a" style="left:390px;top:286px;width:16px;height:314px;background:linear-gradient(90deg,#fdfdfd,#efefef);border:1px solid #bcbcbc"></div>
<div class="a" style="left:390px;top:978px;width:16px;height:16px;background:linear-gradient(90deg,#fefefe,#f1f1f1);border:1px solid #cfcfcf;border-bottom:none"></div>
<svg class="a" style="left:393px;top:984px" width="10" height="6"><path d="M0 0 L10 0 L5 5.5Z" fill="#606060"/></svg>


<!-- tabs -->
<div class="tab" style="left:415px;width:159px"></div>
<div class="t" style="left:429px;top:132px;font-size:13px;z-index:3">formdesigner.ring</div>
<div style="position:absolute;z-index:3;left:0;top:0"><svg class="a" style="left:537px;top:132px" width="14" height="14" viewBox="0 0 14 14"><path d="M2.5 1.2 Q3.5 0.6 4.2 1.4 L12.2 10.6 Q13 11.8 11.8 12.6 Q10.8 13.2 10 12.2 L2.2 2.6 Q1.8 1.8 2.5 1.2Z" fill="#111"/><path d="M12 1 L1 13" stroke="#111" stroke-width="1.5" stroke-linecap="round"/></svg></div>
<div class="tab" style="left:573px;width:145px"></div>
<div class="t" style="left:587px;top:132px;font-size:13px;z-index:3">qcheckbox.ring</div>
<div style="position:absolute;z-index:3;left:0;top:0"><svg class="a" style="left:681px;top:132px" width="14" height="14" viewBox="0 0 14 14"><path d="M2.5 1.2 Q3.5 0.6 4.2 1.4 L12.2 10.6 Q13 11.8 11.8 12.6 Q10.8 13.2 10 12.2 L2.2 2.6 Q1.8 1.8 2.5 1.2Z" fill="#111"/><path d="M12 1 L1 13" stroke="#111" stroke-width="1.5" stroke-linecap="round"/></svg></div>
<div class="tab" style="left:717px;top:119px;height:35px;width:120px;background:#fff;z-index:2"></div>
<div class="t" style="left:731px;top:132px;font-size:13px;z-index:3">qlabel.ring</div>
<div style="position:absolute;z-index:3;left:0;top:0"><svg class="a" style="left:800px;top:132px" width="14" height="14" viewBox="0 0 14 14"><path d="M2.5 1.2 Q3.5 0.6 4.2 1.4 L12.2 10.6 Q13 11.8 11.8 12.6 Q10.8 13.2 10 12.2 L2.2 2.6 Q1.8 1.8 2.5 1.2Z" fill="#111"/><path d="M12 1 L1 13" stroke="#111" stroke-width="1.5" stroke-linecap="round"/></svg></div>
<div class="tab" style="left:836px;width:147px"></div>
<div class="t" style="left:850px;top:132px;font-size:13px;z-index:3">qlistwidget.ring</div>
<div style="position:absolute;z-index:3;left:0;top:0"><svg class="a" style="left:946px;top:132px" width="14" height="14" viewBox="0 0 14 14"><path d="M2.5 1.2 Q3.5 0.6 4.2 1.4 L12.2 10.6 Q13 11.8 11.8 12.6 Q10.8 13.2 10 12.2 L2.2 2.6 Q1.8 1.8 2.5 1.2Z" fill="#111"/><path d="M12 1 L1 13" stroke="#111" stroke-width="1.5" stroke-linecap="round"/></svg></div>
<div class="tab" style="left:982px;width:150px"></div>
<div class="t" style="left:996px;top:132px;font-size:13px;z-index:3">qcombobox.ring</div>
<div style="position:absolute;z-index:3;left:0;top:0"><svg class="a" style="left:1095px;top:132px" width="14" height="14" viewBox="0 0 14 14"><path d="M2.5 1.2 Q3.5 0.6 4.2 1.4 L12.2 10.6 Q13 11.8 11.8 12.6 Q10.8 13.2 10 12.2 L2.2 2.6 Q1.8 1.8 2.5 1.2Z" fill="#111"/><path d="M12 1 L1 13" stroke="#111" stroke-width="1.5" stroke-linecap="round"/></svg></div>

<!-- editor -->
<div id="editor" class="a">
<div class="a" style="left:0;top:0;width:34px;height:811px;background:#000"></div>
<div class="a" style="left:38px;top:0px;width:1091px;height:32px;background:#000"></div>
<div class="a" style="left:1px;top:0;width:1px;height:0"></div>
<div class="a" style="left:38px;top:0;width:1091px;height:792px;overflow:hidden">
<div class="cl" style="left:0;top:2px"></div>
<div class="cl" style="left:0;top:34px"><span class="k">package</span> formdesigner</div>
<div class="cl" style="left:0;top:66px"></div>
<div class="cl" style="left:0;top:98px"><span class="k">class</span> FormDesigner_QLabel <span class="k">from</span> <span class="y">QLabel</span></div>
<div class="cl" style="left:0;top:130px"></div>
<div class="cl" style="left:0;top:162px">        nTextAlign = 0</div>
<div class="cl" style="left:0;top:194px"></div>
<div class="cl" style="left:0;top:226px">        <span class="p">CreateCommonAttributes</span>()</div>
<div class="cl" style="left:0;top:258px">        <span class="p">CreateMoveResizeCornersAttributes</span>()</div>
<div class="cl" style="left:0;top:290px"></div>
<div class="cl" style="left:0;top:322px">        <span class="k">func</span> TextAlign</div>
<div class="cl" style="left:0;top:354px">                <span class="k">return</span> nTextAlign</div>
<div class="cl" style="left:0;top:386px"></div>
<div class="cl" style="left:0;top:418px">        <span class="k">func</span> SetTextAlign nIndex</div>
<div class="cl" style="left:0;top:450px">                nTextAlign = nIndex</div>
<div class="cl" style="left:0;top:482px">                <span class="k">Switch</span> nIndex {</div>
<div class="cl" style="left:0;top:514px">                        <span class="k">case</span> 0</div>
<div class="cl" style="left:0;top:546px">                                <span class="p">setalignment</span>(Qt_AlignLeft |  Qt_AlignVCenter)</div>
<div class="cl" style="left:0;top:578px">                        <span class="k">case</span> 1</div>
<div class="cl" style="left:0;top:610px">                                <span class="p">setalignment</span>(Qt_AlignHCenter |  Qt_AlignVCenter)</div>
<div class="cl" style="left:0;top:642px">                        <span class="k">case</span> 2</div>
<div class="cl" style="left:0;top:674px">                                <span class="p">setalignment</span>(Qt_AlignRight |  Qt_AlignVCenter)</div>
<div class="cl" style="left:0;top:706px">                }</div>
<div class="cl" style="left:0;top:738px"></div>
<div class="cl" style="left:0;top:770px">        <span class="k">func</span> AddObjectProperties  oDesigner</div>
</div>
<div class="ln" style="top:1px">7</div>
<div class="ln" style="top:33px">8</div>
<div class="ln" style="top:65px">9</div>
<div class="ln" style="top:97px">10</div>
<div class="ln" style="top:129px">11</div>
<div class="ln" style="top:161px">12</div>
<div class="ln" style="top:193px">13</div>
<div class="ln" style="top:225px">14</div>
<div class="ln" style="top:257px">15</div>
<div class="ln" style="top:289px">16</div>
<div class="ln" style="top:321px">17</div>
<div class="ln" style="top:353px">18</div>
<div class="ln" style="top:385px">19</div>
<div class="ln" style="top:417px">20</div>
<div class="ln" style="top:449px">21</div>
<div class="ln" style="top:481px">22</div>
<div class="ln" style="top:513px">23</div>
<div class="ln" style="top:545px">24</div>
<div class="ln" style="top:577px">25</div>
<div class="ln" style="top:609px">26</div>
<div class="ln" style="top:641px">27</div>
<div class="ln" style="top:673px">28</div>
<div class="ln" style="top:705px">29</div>
<div class="ln" style="top:737px">30</div>
<div class="ln" style="top:769px">31</div>

<div class="a" style="left:1129px;top:0;width:17px;height:17px;background:#efefef;border:1px solid;border-color:#fff #8c8c8c #8c8c8c #fff"></div>
<svg class="a" style="left:1133px;top:6px" width="9" height="6"><path d="M0 5.5 L4.5 0.5 L9 5.5Z" fill="#5a5a5a"/></svg>
<div class="a" style="left:1129px;top:64px;width:17px;height:187px;background:#efefef;border:1px solid;border-color:#fff #8c8c8c #8c8c8c #fff"></div>
<div class="a" style="left:1129px;top:775px;width:17px;height:17px;background:#efefef;border:1px solid;border-color:#fff #8c8c8c #8c8c8c #fff"></div>
<svg class="a" style="left:1133px;top:781px" width="9" height="6"><path d="M0 0.5 L4.5 5.5 L9 0.5Z" fill="#5a5a5a"/></svg>
<div class="a" style="left:0;top:792px;width:16px;height:17px;background:#efefef;border:1px solid;border-color:#fff #8c8c8c #8c8c8c #fff"></div>
<svg class="a" style="left:5px;top:796px" width="6" height="9"><path d="M5.5 0 L0.5 4.5 L5.5 9Z" fill="#5a5a5a"/></svg>
<div class="a" style="left:16px;top:792px;width:724px;height:17px;background:#efefef;border:1px solid;border-color:#fff #8c8c8c #8c8c8c #fff"></div>
<div class="a" style="left:1112px;top:792px;width:17px;height:17px;background:#efefef;border:1px solid;border-color:#fff #8c8c8c #8c8c8c #fff"></div>
<svg class="a" style="left:1118px;top:796px" width="6" height="9"><path d="M0.5 0 L5.5 4.5 L0.5 9Z" fill="#5a5a5a"/></svg>
<div class="a" style="left:1129px;top:792px;width:17px;height:17px;background:#efefef"></div>

</div>

<!-- right list -->
<div class="a" style="left:1569px;top:119px;width:350px;height:845px;background:#fff;border-left:1px solid #a9a9a9;border-bottom:1px solid #a9a9a9"></div>
<div class="fn" style="left:1573px;top:121px">addobjectproperties()</div>
<div class="fn" style="left:1573px;top:153px">comboitemaction()</div>
<div class="fn" style="left:1573px;top:185px">displayproperties()</div>
<div class="fn" style="left:1573px;top:217px">generatecustomcode()</div>
<div class="fn" style="left:1573px;top:249px">objectdataasstring()</div>
<div class="fn" style="left:1573px;top:281px">restoreproperties()</div>
<div class="fn" style="left:1573px;top:313px">settextalign()</div>
<div class="fn" style="left:1573px;top:345px">textalign()</div>
<div class="fn" style="left:1573px;top:377px">updateproperties()</div>

<!-- bottom tabs -->

<div class="a" style="left:414px;top:964px;width:384px;height:30px;background:linear-gradient(#fdfdfd,#f3f3f3);border:1px solid #b8b8b8;border-top:none;border-radius:0 0 3px 3px"></div>
<div class="t" style="left:429px;top:973px;font-size:13px">Source Code : B:/ring/tools/formdesigner/controls/qlabel.ring</div>
<div class="a" style="left:797px;top:965px;width:115px;height:27px;background:#e1e1e1;border:1px solid #c4c4c4;border-radius:0 0 3px 3px"></div>
<div class="t" style="left:812px;top:973px;font-size:13px">Form Designer</div>
<div class="a" style="left:911px;top:965px;width:107px;height:27px;background:#e1e1e1;border:1px solid #c4c4c4;border-radius:0 0 3px 3px"></div>
<div class="t" style="left:926px;top:973px;font-size:13px">Web Browser</div>

<div class="a" style="left:1569px;top:964px;width:107px;height:30px;background:linear-gradient(#fdfdfd,#f3f3f3);border:1px solid #b8b8b8;border-top:none;border-radius:0 0 3px 3px"></div>
<div class="t" style="left:1584px;top:973px;font-size:13px">Functions (9)</div>
<div class="a" style="left:1675px;top:965px;width:95px;height:27px;background:#e1e1e1;border:1px solid #c4c4c4;border-radius:0 0 3px 3px"></div>
<div class="t" style="left:1689px;top:973px;font-size:13px">Classes (1)</div>
<div class="a" style="left:1769px;top:965px;width:67px;height:27px;background:#e1e1e1;border:1px solid #c4c4c4;border-radius:0 0 3px 3px"></div>
<div class="t" style="left:1783px;top:973px;font-size:13px">Output</div>


<!-- status -->
<div class="t" style="left:11px;top:1002px;font-size:14.3px">Line : 7 Column : 1 Total Lines : 97</div>

<div class="a" style="left:414px;top:151px;width:1148px;height:1px;background:#a8a8a8"></div><div class="a" style="left:415px;top:152px;width:1146px;height:2px;background:#fbfbfb"></div><div class="a" style="left:1561px;top:151px;width:1px;height:812px;background:#a8a8a8"></div><div class="a" style="left:414px;top:962px;width:1148px;height:1px;background:#a0a0a0"></div><div class="a" style="left:414px;top:963px;width:1148px;height:1px;background:#f0f0f0"></div>
<svg class="a" style="left:380px;top:103px" width="25" height="12" viewBox="0 0 25 12"><rect x="0.5" y="0.5" width="10" height="10" rx="1.5" fill="none" stroke="#808080"/><rect x="2.5" y="4.5" width="4" height="4" fill="none" stroke="#707070"/><path d="M4.5 4.5 V2.5 H8.5 V6.5 H6.5" fill="none" stroke="#707070"/><rect x="14.5" y="0.5" width="10" height="10" rx="1.5" fill="none" stroke="#707070"/><path d="M17 3 L22.5 8.5 M22.5 3 L17 8.5" stroke="#555" stroke-width="1.9"/></svg>
<svg class="a" style="left:1893px;top:103px" width="25" height="12" viewBox="0 0 25 12"><rect x="0.5" y="0.5" width="10" height="10" rx="1.5" fill="none" stroke="#808080"/><rect x="2.5" y="4.5" width="4" height="4" fill="none" stroke="#707070"/><path d="M4.5 4.5 V2.5 H8.5 V6.5 H6.5" fill="none" stroke="#707070"/><rect x="14.5" y="0.5" width="10" height="10" rx="1.5" fill="none" stroke="#707070"/><path d="M17 3 L22.5 8.5 M22.5 3 L17 8.5" stroke="#555" stroke-width="1.9"/></svg>
<svg class="a" style="left:5px;top:3px" width="18" height="20" viewBox="0 0 18 20">
<rect x="1.5" y="2.5" width="15" height="17" rx="1.5" fill="#f1ead4" stroke="#c9bc98"/>
<path d="M4 1 V4 M7 1 V4 M10 1 V4 M13 1 V4" stroke="#7a88a8" stroke-width="1"/>
<circle cx="9" cy="8" r="2" fill="none" stroke="#f0b020" stroke-width="1.2"/>
<text x="9" y="13.5" text-anchor="middle" font-family="Liberation Sans" font-size="4.5" font-weight="bold" fill="#5a7ab0">Ring</text>
<path d="M3 18 Q4 14.5 8 15 L15 14 V18Z" fill="#bcd4e6"/></svg>
<div class="a" style="left:768px;top:44px;width:362px;height:56px;border:5px solid #3d45c8;border-radius:43px 43px 35px 33px / 14px 14px 11px 12px"></div>
<div class="a" style="left:1459px;top:93px;width:405px;height:26px;background:#ffffe1;border:1px solid #000;box-shadow:2px 2px 3px rgba(0,0,0,0.25)"></div>
<div class="t" style="left:1463px;top:99px;font-size:14.8px">Main File : Run GUI Application - No Console (Ctrl+Shift+F5)</div>
<div class="a" style="left:1832px;top:48px;width:53px;height:51px;border:5.5px solid #3d45c8;border-radius:50%"></div>
</body></html>
